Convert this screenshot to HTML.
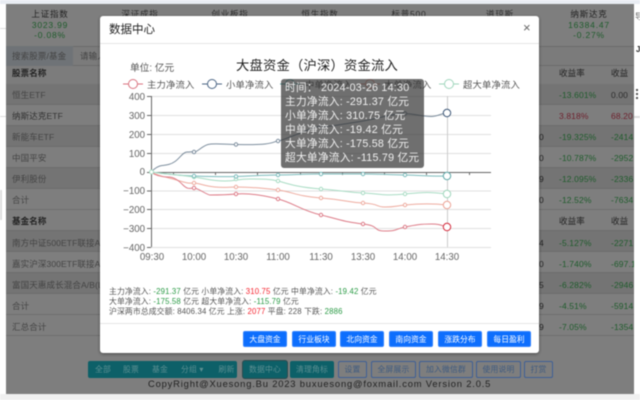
<!DOCTYPE html>
<html lang="zh"><head><meta charset="utf-8"><title>数据中心</title>
<style>
*{box-sizing:border-box}
html,body{margin:0;padding:0;width:640px;height:400px;overflow:hidden;background:#fff;font-family:"Liberation Sans","Noto Sans CJK SC",sans-serif}
#w{position:absolute;left:0;top:0;width:640px;height:400px;overflow:hidden;filter:blur(.5px);background:#fff}
.a{position:absolute;white-space:nowrap}
#bg{position:absolute;left:6px;top:4px;width:628px;height:390px;background:#7e7e7e}
.row{position:absolute;left:6px;width:628px;height:21px;border-bottom:1px solid #6e6e6e}
.t{position:absolute;white-space:nowrap;font-size:8.5px;line-height:10px;letter-spacing:.12px;color:#2c2c2c}
.c{transform:translateX(-50%);text-align:center;letter-spacing:.8px}
.g{color:#1f5c2c}.r{color:#6e1f2c}
.b{position:absolute;top:361px;height:17px;line-height:16px;text-align:center;font-size:7.8px;letter-spacing:.2px;color:#3d5a80;border:1px solid #3e5f96;border-radius:2px}
.tb{background:#0d6068;color:#5d8f92;border:none;line-height:17px}
#m{position:absolute;left:100px;top:16px;width:439px;height:337px;background:#fff;border-radius:3px;box-shadow:0 1px 3px rgba(0,0,0,.4)}
.fb{position:absolute;top:331px;height:16px;width:44px;line-height:15px;text-align:center;font-size:7.8px;color:#fff;background:#0d6efd;border:1px solid #2f80fd;border-radius:2px}
.st{position:absolute;left:109px;white-space:nowrap;font-size:7.8px;line-height:10px;color:#555;letter-spacing:.15px}
.st b{font-weight:normal;color:#2a9a45}.st i{font-style:normal;color:#f5222d}
#tip{position:absolute;left:281px;top:79px;width:143px;height:89px;background:rgba(50,50,50,.7);border-radius:3px;color:#f0f0f0;font-size:10.7px;line-height:14px;padding:2px 4px;white-space:nowrap;letter-spacing:.25px}
</style></head><body>
<div id="w">
<div class="a" style="left:0;top:0;width:640px;height:4px;background:#e9edf3"></div>
<div class="a" style="left:0;top:394px;width:640px;height:6px;background:#f0f0f0"></div>
<div class="a" style="left:0;top:28px;width:6px;height:1px;background:#ddd"></div>
<div class="a" style="left:0;top:116px;width:6px;height:1px;background:#ddd"></div>
<div class="a" style="left:0;top:190px;width:2px;height:30px;background:#ddd"></div>
<div class="a" style="left:634px;top:116px;width:6px;height:2px;background:#ddd"></div>
<div class="a" style="left:635px;top:11px;font-size:8px;color:#555">导</div>
<div class="a" style="left:636px;top:45px;font-size:8px;font-weight:bold;color:#222">J</div>
<div class="a" style="left:636px;top:89px;width:2px;height:2px;background:#555;box-shadow:0 4px #555,0 8px #555"></div>
<div id="bg"></div>

<div class="t c" style="left:50px;top:9px;color:#222;font-size:8.5px">上证指数</div>
<div class="t c g" style="left:50px;top:20px">3023.99</div>
<div class="t c g" style="left:50px;top:30px">-0.08%</div>
<div class="t c" style="left:140px;top:9px">深证成指</div>
<div class="t c" style="left:230px;top:9px">创业板指</div>
<div class="t c" style="left:320px;top:9px">恒生指数</div>
<div class="t c" style="left:409px;top:9px">标普500</div>
<div class="t c" style="left:500px;top:9px">道琼斯</div>
<div class="t c" style="left:589px;top:9px;color:#222">纳斯达克</div>
<div class="t c g" style="left:589px;top:20px">16384.47</div>
<div class="t c g" style="left:589px;top:30px">-0.27%</div>

<div class="a" style="left:6px;top:46px;width:628px;height:20px;background:#7b7b7b;border-top:1px solid #6c6c6c;border-bottom:1px solid #6c6c6c"></div>
<div class="a" style="left:6px;top:46px;width:67px;height:20px;background:#6f7377"></div>
<div class="t" style="left:12px;top:51px;color:#444">搜索股票/基金</div>
<div class="t" style="left:80px;top:51px;color:#444">请输入</div>

<div class="row" style="top:66px;background:#7c7c7c"></div>
<div class="row" style="top:84px;height:21px;background:#747474"></div>
<div class="row" style="top:105px;background:#7e7e7e"></div>
<div class="row" style="top:126px;background:#747474"></div>
<div class="row" style="top:147px;background:#7e7e7e"></div>
<div class="row" style="top:168px;background:#747474"></div>
<div class="row" style="top:189px;background:#7e7e7e"></div>
<div class="row" style="top:210px;background:#7e7e7e"></div>
<div class="row" style="top:231px;background:#747474"></div>
<div class="row" style="top:252px;background:#7e7e7e"></div>
<div class="row" style="top:273px;background:#747474"></div>
<div class="row" style="top:294px;background:#7e7e7e"></div>
<div class="row" style="top:315px;background:#7e7e7e"></div>

<div class="t" style="left:12px;top:68px;font-weight:bold;color:#222">股票名称</div>
<div class="t" style="left:12px;top:90px;color:#444">恒生ETF</div>
<div class="t" style="left:12px;top:111px;color:#333">纳斯达克ETF</div>
<div class="t" style="left:12px;top:132px;color:#444">新能车ETF</div>
<div class="t" style="left:12px;top:153px;color:#444">中国平安</div>
<div class="t" style="left:12px;top:174px;color:#444">伊利股份</div>
<div class="t" style="left:12px;top:195px;color:#444">合计</div>
<div class="t" style="left:12px;top:216px;font-weight:bold;color:#222">基金名称</div>
<div class="t" style="left:12px;top:238px;color:#444;width:88px;overflow:hidden">南方中证500ETF联接A</div>
<div class="t" style="left:12px;top:259px;color:#444;width:88px;overflow:hidden">嘉实沪深300ETF联接A</div>
<div class="t" style="left:12px;top:280px;color:#444;width:88px;overflow:hidden">富国天惠成长混合A/B(L</div>
<div class="t" style="left:12px;top:301px;color:#444">合计</div>
<div class="t" style="left:12px;top:322px;color:#444">汇总合计</div>

<div class="t" style="left:559px;top:68px;color:#222">收益率</div><div class="t" style="left:611px;top:68px;color:#222">收益</div>
<div class="t g" style="left:559px;top:90px">-13.601%</div><div class="t" style="left:611px;top:90px">0.00</div>
<div class="t r" style="left:559px;top:111px">3.818%</div><div class="t r" style="left:611px;top:111px;width:23px;overflow:hidden">68.20</div>
<div class="t g" style="left:559px;top:132px">-19.325%</div><div class="t g" style="left:611px;top:132px;width:23px;overflow:hidden">-2414</div>
<div class="t g" style="left:559px;top:153px">-10.787%</div><div class="t g" style="left:611px;top:153px;width:23px;overflow:hidden">-2952</div>
<div class="t g" style="left:559px;top:174px">-12.095%</div><div class="t g" style="left:611px;top:174px;width:23px;overflow:hidden">-2336</div>
<div class="t g" style="left:559px;top:195px">-12.52%</div><div class="t g" style="left:611px;top:195px;width:23px;overflow:hidden">-7634</div>
<div class="t" style="left:559px;top:216px;color:#222">收益率</div><div class="t" style="left:611px;top:216px;color:#222">收益</div>
<div class="t g" style="left:559px;top:238px">-5.127%</div><div class="t g" style="left:611px;top:238px;width:23px;overflow:hidden">-2271</div>
<div class="t g" style="left:559px;top:259px">-1.740%</div><div class="t g" style="left:611px;top:259px;width:23px;overflow:hidden">-697.1</div>
<div class="t g" style="left:559px;top:280px">-6.282%</div><div class="t g" style="left:611px;top:280px;width:23px;overflow:hidden">-2946</div>
<div class="t g" style="left:559px;top:301px">-4.51%</div><div class="t g" style="left:611px;top:301px;width:23px;overflow:hidden">-5914</div>
<div class="t g" style="left:559px;top:322px">-7.05%</div><div class="t g" style="left:611px;top:322px;width:23px;overflow:hidden">-1354</div>
<div class="t" style="left:539px;top:132px;color:#222">0</div>
<div class="t" style="left:539px;top:153px;color:#222">0</div>
<div class="t" style="left:539px;top:174px;color:#222">9</div>
<div class="t" style="left:539px;top:195px;color:#222">0</div>
<div class="t" style="left:539px;top:238px;color:#222">4</div>
<div class="t" style="left:539px;top:259px;color:#222">0</div>
<div class="t" style="left:539px;top:280px;color:#222">5</div>
<div class="t" style="left:539px;top:301px;color:#222">9</div>
<div class="t" style="left:539px;top:322px;color:#222">9</div>

<!-- bottom buttons -->
<div class="b tb" style="left:88px;width:149px;text-align:left;padding-left:7px">全部<span style="margin-left:12px">股票</span><span style="margin-left:13px">基金</span><span style="margin-left:13px">分组 ▾</span><span style="margin-left:15px">刷新</span></div>
<div class="b tb" style="left:243px;width:44px;box-shadow:0 0 0 1px #2e4a4e">数据中心</div>
<div class="b tb" style="left:290px;width:44px">清理角标</div>
<div class="b" style="left:338px;width:29px">设置</div>
<div class="b" style="left:371px;width:45px">全屏展示</div>
<div class="b" style="left:419px;width:54px">加入微信群</div>
<div class="b" style="left:476px;width:45px">使用说明</div>
<div class="b" style="left:524px;width:29px">打赏</div>
<div class="a" style="left:148px;top:378px;font-size:9.4px;line-height:11px;letter-spacing:.82px;color:#222">CopyRight@Xuesong.Bu 2023 buxuesong@foxmail.com Version 2.0.5</div>

<!-- modal -->
<div id="m"></div>
<div class="a" style="left:109px;top:22px;font-size:11.5px;line-height:16px;color:#222">数据中心</div>
<div class="a" style="left:523px;top:20px;font-size:13px;line-height:16px;color:#666">×</div>
<div class="a" style="left:100px;top:43px;width:439px;height:1px;background:#e6e6e6"></div>
<div class="a" style="left:100px;top:323px;width:439px;height:1px;background:#e6e6e6"></div>

<div class="a" style="left:236px;top:57px;font-size:13.3px;line-height:18px;color:#222;letter-spacing:.2px">大盘资金（沪深）资金流入</div>
<div class="a" style="left:130px;top:62px;font-size:9.7px;line-height:14px;color:#555">单位: 亿元</div>

<svg class="a" style="left:100px;top:60px;overflow:visible" width="440" height="220" viewBox="100 60 440 220" font-family="Liberation Sans,Noto Sans CJK SC,sans-serif">
<g stroke="#e0e0e0" stroke-width="1">
<line x1="151" y1="96.5" x2="491" y2="96.5"/><line x1="151" y1="115.5" x2="491" y2="115.5"/><line x1="151" y1="134.5" x2="491" y2="134.5"/><line x1="151" y1="153.5" x2="491" y2="153.5"/>
<line x1="151" y1="191" x2="491" y2="191"/><line x1="151" y1="209.5" x2="491" y2="209.5"/><line x1="151" y1="228.5" x2="491" y2="228.5"/><line x1="151" y1="247.5" x2="491" y2="247.5"/>
<line x1="447.5" y1="96" x2="447.5" y2="247" stroke="#ccc"/>
</g>
<g stroke="#666" stroke-width="1">
<line x1="151.5" y1="96" x2="151.5" y2="247"/>
<line x1="151" y1="172.5" x2="491" y2="172.5"/>
<line x1="147" y1="96.5" x2="151" y2="96.5"/><line x1="147" y1="115.5" x2="151" y2="115.5"/><line x1="147" y1="134.5" x2="151" y2="134.5"/><line x1="147" y1="153.5" x2="151" y2="153.5"/><line x1="147" y1="172.5" x2="151" y2="172.5"/><line x1="147" y1="191" x2="151" y2="191"/><line x1="147" y1="209.5" x2="151" y2="209.5"/><line x1="147" y1="228.5" x2="151" y2="228.5"/><line x1="147" y1="247.5" x2="151" y2="247.5"/>
<line x1="173.5" y1="172" x2="173.5" y2="175"/><line x1="215.5" y1="172" x2="215.5" y2="175"/><line x1="257.5" y1="172" x2="257.5" y2="175"/><line x1="300.5" y1="172" x2="300.5" y2="175"/><line x1="342.5" y1="172" x2="342.5" y2="175"/><line x1="384.5" y1="172" x2="384.5" y2="175"/><line x1="426.5" y1="172" x2="426.5" y2="175"/><line x1="469.5" y1="172" x2="469.5" y2="175"/>
</g>
<g font-size="9.7" fill="#666" text-anchor="end">
<text x="145" y="100">400</text><text x="145" y="119">300</text><text x="145" y="138">200</text><text x="145" y="157">100</text><text x="145" y="175">0</text><text x="145" y="194">−100</text><text x="145" y="213">−200</text><text x="145" y="232">−300</text><text x="145" y="251">−400</text>
</g>
<g font-size="9.7" fill="#666" text-anchor="middle">
<text x="152" y="260">09:30</text><text x="194" y="260">10:00</text><text x="236" y="260">10:30</text><text x="278" y="260">11:00</text><text x="321" y="260">11:30</text><text x="363" y="260">13:30</text><text x="405" y="260">14:00</text><text x="447" y="260">14:30</text>
</g>
<!-- legend -->
<g font-size="9.3" fill="#555" letter-spacing=".2">
<g fill="#fff" stroke-width="1">
<line x1="123" y1="84" x2="143" y2="84" stroke="#d9737f"/><circle cx="133" cy="84" r="4.5" stroke="#d9737f"/>
<line x1="202" y1="84" x2="222" y2="84" stroke="#4a6484"/><circle cx="212" cy="84" r="4.5" stroke="#4a6484"/>
<line x1="280" y1="84" x2="300" y2="84" stroke="#5fa8a8"/><circle cx="290" cy="84" r="4.5" stroke="#5fa8a8"/>
<line x1="360" y1="84" x2="380" y2="84" stroke="#eda497"/><circle cx="370" cy="84" r="4.5" stroke="#eda497"/>
<line x1="439" y1="84" x2="459" y2="84" stroke="#9fd6bc"/><circle cx="449" cy="84" r="4.5" stroke="#9fd6bc"/>
</g>
<text x="147" y="88">主力净流入</text><text x="226" y="88">小单净流入</text><text x="305" y="88">中单净流入</text><text x="384" y="88">大单净流入</text><text x="463" y="88">超大单净流入</text>
</g>
<!-- series -->
<g fill="none" stroke-width="1" stroke-linejoin="round">
<path stroke="#7d8e9e" d="M151 172C155 168 158 166 162 165.5S170 165 175 161.5S183 152 187 152S191 151.5 194 152S202 146 208 144.5S225 144.5 236 144.5S255 145 265 144S275 141 278 141S295 135 308 130S316 127 321 127S345 124 363 121S395 113 405 113.5S425 117 432 116.5S442 113 447 113"/>
<path stroke="#7cbcbc" d="M151 172C165 174 180 175.5 194 176S220 177 236 176.5S265 175 278 175S305 174 321 174S345 174 363 174S395 175 405 175S430 176.5 447 176"/>
<path stroke="#a9dcc4" d="M151 172C165 174 180 175 194 177S212 181 225 181S236 179 250 179S270 179 278 181S295 187 321 189S345 192 363 193S385 196 405 194S430 192 447 194"/>
<path stroke="#eeaca0" d="M151 172C158 176 170 178 180 181S190 183 194 183S205 186 215 187S228 187 236 187S262 188 278 190S295 196 321 198S345 202 363 203S375 207 385 207S395 206 405 205S430 203 447 205"/>
<path stroke="#dd7c88" d="M151 172C156 176 162 177 168 177S178 180 183 185S190 188 194 188S207 195 210 195S225 195 236 194S262 195 278 199S300 210 321 215S345 222 363 224S372 231 385 231S395 229 405 227S420 224 432 224S442 227 447 227"/>
</g>
<g fill="#fff" stroke-width="1">
<g stroke="#dd7c88"><circle cx="194" cy="188" r="1.7"/><circle cx="236" cy="194" r="1.7"/><circle cx="278" cy="199" r="1.7"/><circle cx="321" cy="215" r="1.7"/><circle cx="363" cy="224" r="1.7"/><circle cx="405" cy="227" r="1.7"/></g>
<g stroke="#eeaca0"><circle cx="194" cy="183" r="1.7"/><circle cx="236" cy="187" r="1.7"/><circle cx="278" cy="190" r="1.7"/><circle cx="321" cy="198" r="1.7"/><circle cx="363" cy="203" r="1.7"/><circle cx="405" cy="205" r="1.7"/></g>
<g stroke="#a9dcc4"><circle cx="194" cy="177" r="1.7"/><circle cx="236" cy="179" r="1.7"/><circle cx="278" cy="181" r="1.7"/><circle cx="321" cy="189" r="1.7"/><circle cx="363" cy="193" r="1.7"/><circle cx="405" cy="194" r="1.7"/></g>
<g stroke="#7cbcbc"><circle cx="194" cy="176" r="1.7"/><circle cx="236" cy="176.5" r="1.7"/><circle cx="278" cy="175" r="1.7"/><circle cx="321" cy="174" r="1.7"/><circle cx="363" cy="174" r="1.7"/><circle cx="405" cy="175" r="1.7"/></g>
<g stroke="#7d8e9e"><circle cx="194" cy="152" r="1.7"/><circle cx="236" cy="144.5" r="1.7"/><circle cx="278" cy="141" r="1.7"/><circle cx="321" cy="127" r="1.7"/><circle cx="405" cy="113.5" r="1.7"/></g>
<circle cx="151.5" cy="172" r="2" stroke="#a9dcc4"/>
<circle cx="447" cy="113" r="3.7" stroke="#3c5677"/>
<circle cx="447" cy="176" r="3.7" stroke="#5fa8a8"/>
<circle cx="447" cy="194" r="3.7" stroke="#9fd6bc"/>
<circle cx="447" cy="205" r="3.7" stroke="#eda497"/>
<circle cx="447" cy="227" r="3.7" stroke="#d42a3c"/>
</g>
</svg>

<div id="tip">时间： 2024-03-26 14:30<br>主力净流入: -291.37 亿元<br>小单净流入: 310.75 亿元<br>中单净流入: -19.42 亿元<br>大单净流入: -175.58 亿元<br>超大单净流入: -115.79 亿元</div>

<div class="st" style="top:287px">主力净流入: <b>-291.37</b> 亿元 小单净流入: <i>310.75</i> 亿元 中单净流入: <b>-19.42</b> 亿元</div>
<div class="st" style="top:297px">大单净流入: <b>-175.58</b> 亿元 超大单净流入: <b>-115.79</b> 亿元</div>
<div class="st" style="top:307px">沪深两市总成交额: 8406.34 亿元 上涨: <i>2077</i> 平盘: 228 下跌: <b>2886</b></div>

<div class="fb" style="left:243px">大盘资金</div>
<div class="fb" style="left:292px">行业板块</div>
<div class="fb" style="left:340px">北向资金</div>
<div class="fb" style="left:389px">南向资金</div>
<div class="fb" style="left:438px">涨跌分布</div>
<div class="fb" style="left:487px">每日盈利</div>
</div>
</body></html>
